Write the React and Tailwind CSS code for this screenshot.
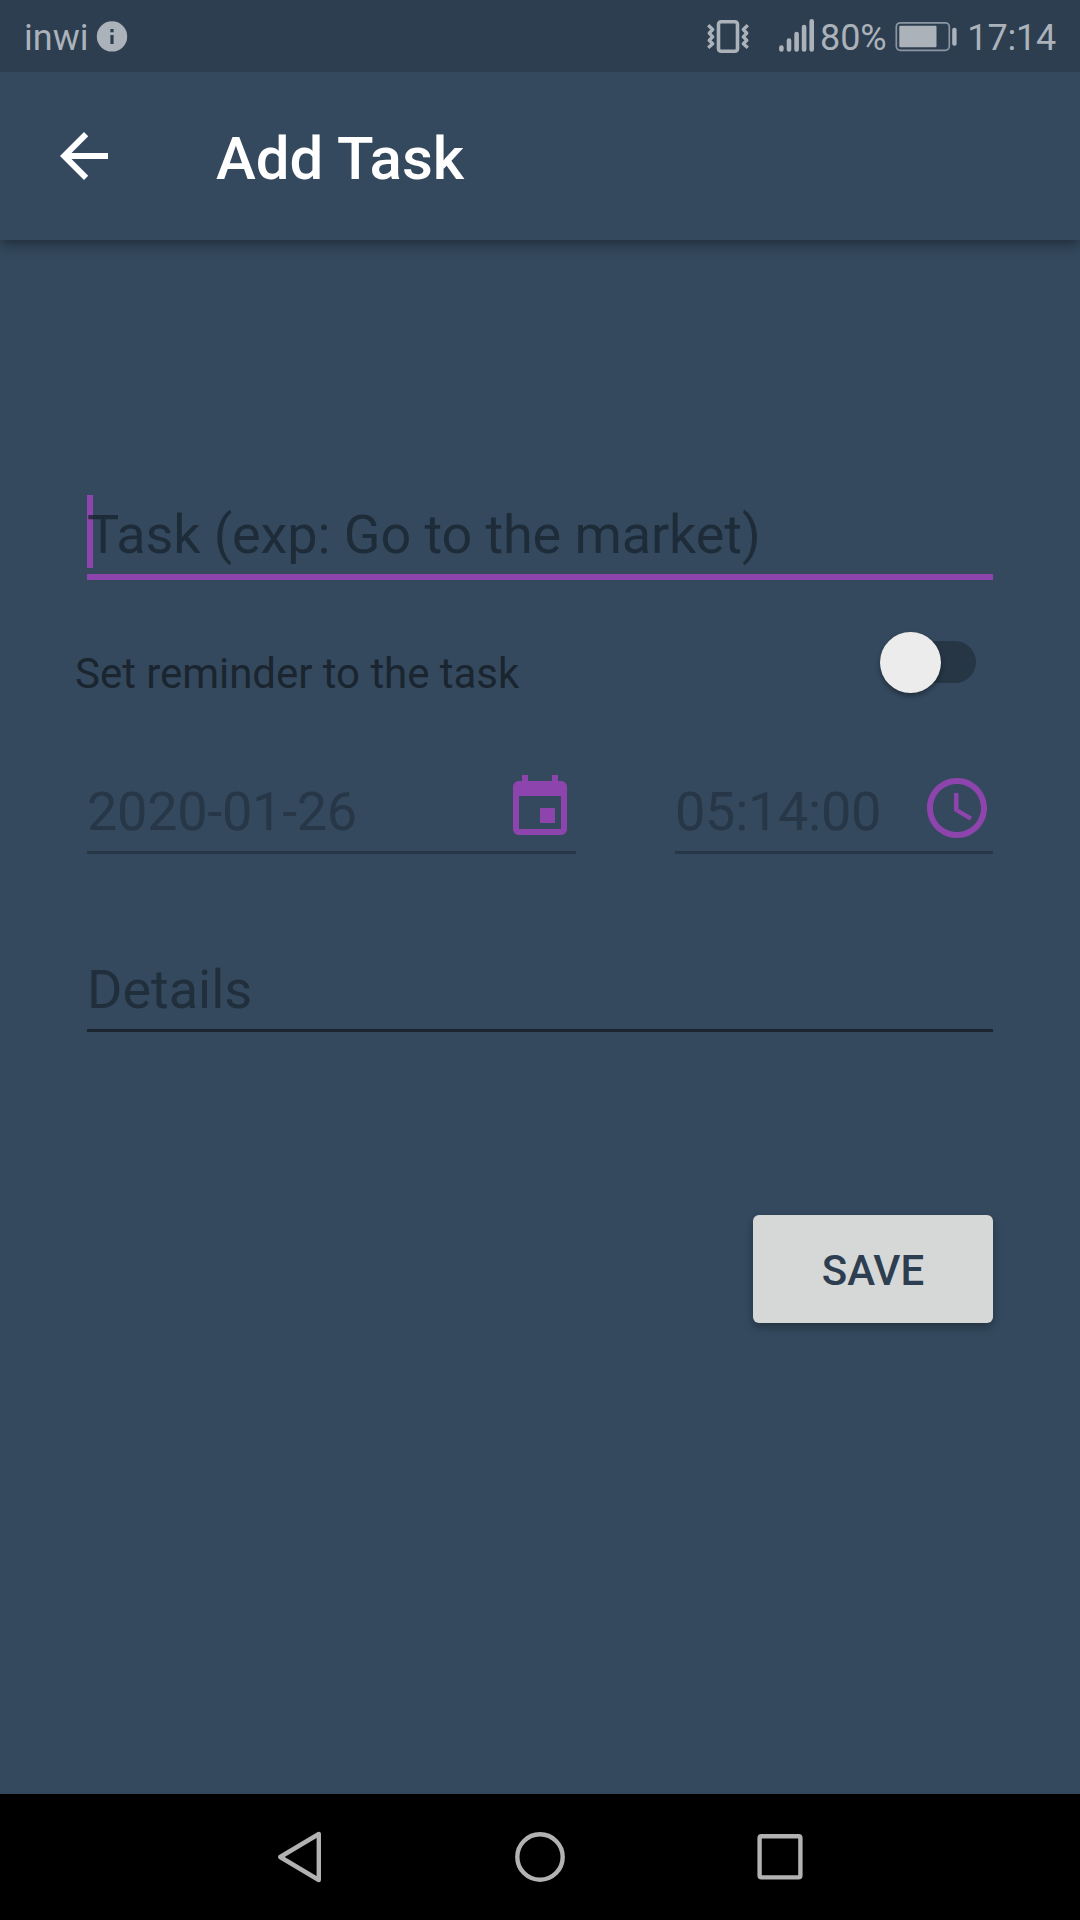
const MATERIAL = {
  back: "M20 11H7.83l5.59-5.59L12 4l-8 8 8 8 1.41-1.41L7.83 13H20v-2z",
  event:
    "M17 12h-5v5h5v-5zM16 1v2H8V1H6v2H5c-1.11 0-1.99.9-1.99 2L3 19c0 1.1.89 2 2 2h14c1.1 0 2-.9 2-2V5c0-1.1-.9-2-2-2h-1V1h-2zm3 18H5V8h14v11z",
  clock:
    "M11.99 2C6.47 2 2 6.48 2 12s4.47 10 9.99 10C17.52 22 22 17.52 22 12S17.52 2 11.99 2zM12 20c-4.42 0-8-3.58-8-8s3.58-8 8-8 8 3.58 8 8-3.58 8-8 8zm.5-13H11v6l5.25 3.15.75-1.23-4.5-2.67z",
};

function Icon({ name, className = "" }) {
  return (
    <svg viewBox="0 0 24 24" className={`size-[72px] shrink-0 fill-current ${className}`}>
      <path d={MATERIAL[name]} />
    </svg>
  );
}

function StatusBar() {
  return (
    <div className="relative z-10 flex h-[72px] items-center bg-[#2c3e50] pl-6 pr-[23px] text-[36px] leading-[36px] text-[#abb2b9]">
      <span className="pt-[3px]">inwi</span>
      <svg className="ml-[7.5px] size-8" viewBox="0 0 32 32">
        <circle cx="16" cy="16.4" r="15.2" fill="#abb2b9" />
        <path d="M14.4 9h3.2v3.2h-3.2zM14.4 15h3.2v9h-3.2z" fill="#2c3e50" />
      </svg>
      <svg className="ml-auto h-[72px] w-11" viewBox="706 0 44 72" fill="none" stroke="#abb2b9">
        <rect x="718.5" y="21.7" width="19" height="29.6" rx="2.5" strokeWidth="3.6" />
        <path
          d="M708.2 25.3l4.5 4.2-3.5 3.6 3.5 3.7-3.5 3.6 3.5 3.4-4.5 4M747.8 25.3l-4.5 4.2 3.5 3.6-3.5 3.7 3.5 3.6-3.5 3.4 4.5 4"
          strokeWidth="3.4"
          strokeLinejoin="round"
        />
      </svg>
      <svg className="ml-7 h-[72px] w-10" viewBox="778 0 40 72" stroke="#abb2b9" strokeWidth="4.6" strokeLinecap="round">
        <path d="M781.4 47.5v2M789 40.5v9M796.6 34v15.5M804.1 27v22.5M811.7 21.3v28.2" />
      </svg>
      <span className="ml-0.5 pt-[3px] tracking-[-0.2px]">80%</span>
      <svg className="ml-2 h-[72px] w-16" viewBox="894 0 64 72">
        <rect x="896.3" y="22.8" width="53" height="27.5" rx="4" fill="none" stroke="#8b96a1" strokeWidth="1.7" />
        <rect x="899.3" y="25.8" width="37.2" height="21.4" rx="1" fill="#abb2b9" />
        <rect x="952.2" y="27.7" width="4.4" height="18" rx="2" fill="#abb2b9" />
      </svg>
      <span className="-mr-px ml-[9px] pr-[2px] pt-[3px] tracking-[-0.2px]">17:14</span>
    </div>
  );
}

function AppBar() {
  return (
    <header className="flex h-[168px] items-center bg-[#34495e] pl-12 text-white shadow-[0_4px_12px_rgba(0,0,0,0.4)]">
      <Icon name="back" />
      <h1 className="ml-24 pt-[5px] text-[60px] font-medium leading-[72px]">Add Task</h1>
    </header>
  );
}

function Switch() {
  return (
    <div className="mb-[1px] mr-[17px] flex h-[42px] w-[90px] items-center rounded-full bg-[#263645]">
      <div className="-ml-[6px] size-[61px] shrink-0 rounded-full bg-[#ececec] shadow-[0_3px_5px_rgba(0,0,0,0.35)]" />
    </div>
  );
}

function PickerField({ value, icon, className }) {
  return (
    <div className={`flex h-[82px] justify-between border-b-[3px] border-[#273747] text-[#273747] ${className}`}>
      <span className="pt-[4px] text-[54px] leading-[72px] tracking-[-0.27px]">{value}</span>
      <Icon name={icon} className="text-[#8e44ad]" />
    </div>
  );
}

function TaskForm() {
  return (
    <main className="flex flex-1 flex-col px-[87px] pt-[255px]">
      <div className="relative h-[85px] border-b-[6px] border-[#8e44ad]">
        <div className="absolute left-0 top-0 h-[73px] w-[6px] bg-[#8e44ad]" />
        <div className="relative pt-[4px] text-[54px] leading-[72px] tracking-[-0.11px] text-[#192530]/80">
          Task (exp: Go to the market)
        </div>
      </div>
      <div className="-ml-3 mt-[52px] flex h-[61px] items-center justify-between">
        <span className="pt-[22px] text-[42px] leading-[48px] tracking-[-0.04px] text-[#1a252f]">
          Set reminder to the task
        </span>
        <Switch />
      </div>
      <div className="mt-[79px] flex justify-between">
        <PickerField value="2020-01-26" icon="event" className="w-[489px]" />
        <PickerField value="05:14:00" icon="clock" className="w-[318px]" />
      </div>
      <div className="mt-[96px] h-[82px] border-b-[3px] border-[#1a252f] pt-[4px] text-[54px] leading-[72px] text-[#212f3c]">
        Details
      </div>
      <button className="mt-[183px] h-[108px] w-60 self-end rounded-md bg-[#d6d8d7] pt-[3px] text-[42px] font-medium leading-[48px] text-[#2c3e50] shadow-[0_4px_8px_rgba(0,0,0,0.3)]">
        SAVE
      </button>
    </main>
  );
}

function NavBar() {
  return (
    <nav className="flex h-[126px] items-center justify-center gap-[180px] bg-black">
      <svg viewBox="0 0 60 60" className="size-[60px]" fill="none" stroke="#b2b2b2" strokeWidth="4.4" strokeLinejoin="round">
        <path d="M48.8 7v46L10.2 30z" />
      </svg>
      <svg viewBox="0 0 60 60" className="size-[60px]" fill="none" stroke="#b2b2b2" strokeWidth="4.4">
        <circle cx="30" cy="30" r="22.7" />
      </svg>
      <svg viewBox="0 0 60 60" className="size-[60px]" fill="none" stroke="#b2b2b2" strokeWidth="4.4">
        <rect x="9.6" y="9.2" width="40.8" height="41.2" rx="1.8" />
      </svg>
    </nav>
  );
}

export default function App() {
  return (
    <div className="flex h-[1920px] w-[1080px] flex-col overflow-hidden bg-[#34495e] font-['Roboto',sans-serif]">
      <StatusBar />
      <AppBar />
      <TaskForm />
      <NavBar />
    </div>
  );
}
